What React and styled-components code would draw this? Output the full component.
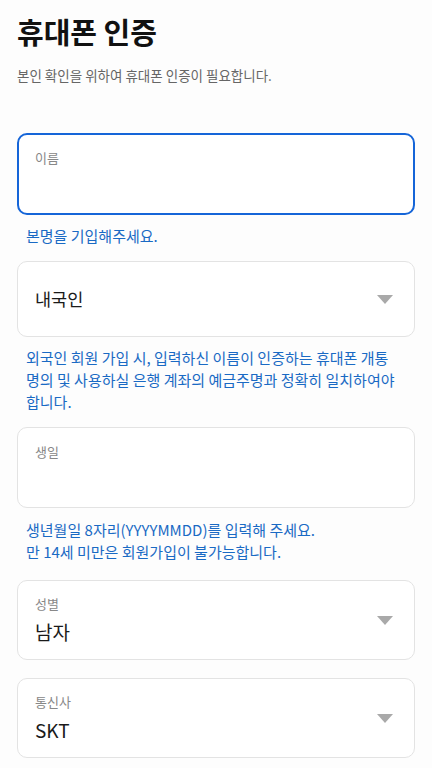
import React from "react";
import styled, { createGlobalStyle } from "styled-components";

const GlobalStyle = createGlobalStyle`
  html, body {
    margin: 0;
    padding: 0;
    background: #fdfdfd;
  }
  body {
    font-family: "Noto Sans CJK KR", "Noto Sans", sans-serif;
    color: #111;
  }
`;

const Page = styled.div`
  padding: 10px 17px 0 17px;
  width: 432px;
  box-sizing: border-box;
`;

const Title = styled.h1`
  margin: 0;
  font-size: 29px;
  font-weight: 700;
  line-height: 42px;
  color: #111;
`;

const SubTitle = styled.p`
  margin: 14px 0 0 0;
  font-size: 13.5px;
  line-height: 18px;
  color: #666;
`;

const Form = styled.div`
  display: flex;
  flex-direction: column;
  margin-top: 49px;
`;

const Field = styled.div`
  display: flex;
  align-items: center;
  justify-content: space-between;
  box-sizing: border-box;
  height: ${(p) => p.height || 80}px;
  padding: 0 ${(p) => (p.focused ? 16 : 17)}px;
  background: #fff;
  border: ${(p) => (p.focused ? "2px solid #1565d8" : "1px solid #e3e3e3")};
  border-radius: 10px;
  margin-bottom: ${(p) => p.gap || 0}px;
`;

const FieldText = styled.div`
  display: flex;
  flex-direction: column;
  gap: 6px;
  align-self: ${(p) => (p.top ? "flex-start" : "center")};
  padding-top: ${(p) => (p.top ? p.pt || 15 : 0)}px;
`;

const Label = styled.span`
  font-size: 13px;
  line-height: 18px;
  color: #888;
`;

const Value = styled.span`
  font-size: ${(p) => p.size || 19}px;
  line-height: 26px;
  color: #1a1a1a;
`;

const Arrow = styled.span`
  width: 0;
  height: 0;
  border-left: 8px solid transparent;
  border-right: 8px solid transparent;
  border-top: 9px solid #a9a9a9;
  margin-right: 4px;
`;

const Helper = styled.p`
  margin: ${(p) => p.mt}px 0 ${(p) => p.mb}px 0;
  padding: 0 9px;
  font-size: 15px;
  line-height: 22px;
  color: #1a6ac4;
`;

export default function App() {
  return (
    <>
      <GlobalStyle />
      <Page>
        <Title>휴대폰 인증</Title>
        <SubTitle>본인 확인을 위하여 휴대폰 인증이 필요합니다.</SubTitle>
        <Form>
          <Field focused height={82}>
            <FieldText top pt={14}>
              <Label>이름</Label>
            </FieldText>
          </Field>
          <Helper mt={10} mb={14}>본명을 기입해주세요.</Helper>

          <Field height={76}>
            <FieldText>
              <Value size={17.5}>내국인</Value>
            </FieldText>
            <Arrow />
          </Field>
          <Helper mt={10} mb={14}>
            외국인 회원 가입 시, 입력하신 이름이 인증하는 휴대폰 개통
            <br />
            명의 및 사용하실 은행 계좌의 예금주명과 정확히 일치하여야
            <br />
            합니다.
          </Helper>

          <Field height={81}>
            <FieldText top>
              <Label>생일</Label>
            </FieldText>
          </Field>
          <Helper mt={11} mb={17}>
            생년월일 8자리(YYYYMMDD)를 입력해 주세요.
            <br />
            만 14세 미만은 회원가입이 불가능합니다.
          </Helper>

          <Field height={80} gap={18}>
            <FieldText>
              <Label>성별</Label>
              <Value>남자</Value>
            </FieldText>
            <Arrow />
          </Field>

          <Field height={80}>
            <FieldText>
              <Label>통신사</Label>
              <Value>SKT</Value>
            </FieldText>
            <Arrow />
          </Field>
        </Form>
      </Page>
    </>
  );
}
